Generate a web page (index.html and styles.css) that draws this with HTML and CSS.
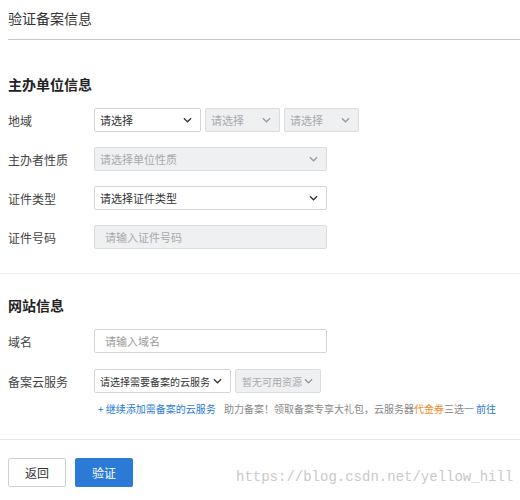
FILE: index.html
```html
<!DOCTYPE html>
<html lang="zh">
<head>
<meta charset="utf-8">
<link rel="stylesheet" href="styles.css">
</head>
<body>
<div class="page">
  <div class="header">验证备案信息</div>

  <div class="section">
    <h2 class="sec-title">主办单位信息</h2>
    <div class="row">
      <div class="label">地域</div>
      <div class="ctrls">
        <div class="select w107"><span>请选择</span><svg viewBox="0 0 10 6"><path d="M1 1l4 4 4-4"/></svg></div>
        <div class="select dis w75"><span>请选择</span><svg viewBox="0 0 10 6"><path d="M1 1l4 4 4-4"/></svg></div>
        <div class="select dis w75"><span>请选择</span><svg viewBox="0 0 10 6"><path d="M1 1l4 4 4-4"/></svg></div>
      </div>
    </div>
    <div class="row">
      <div class="label">主办者性质</div>
      <div class="select dis w233"><span>请选择单位性质</span><svg viewBox="0 0 10 6"><path d="M1 1l4 4 4-4"/></svg></div>
    </div>
    <div class="row">
      <div class="label">证件类型</div>
      <div class="select w233"><span>请选择证件类型</span><svg viewBox="0 0 10 6"><path d="M1 1l4 4 4-4"/></svg></div>
    </div>
    <div class="row">
      <div class="label">证件号码</div>
      <div class="input dis w233"><span>请输入证件号码</span></div>
    </div>
  </div>

  <div class="section sec2">
    <h2 class="sec-title">网站信息</h2>
    <div class="row">
      <div class="label">域名</div>
      <div class="input w233"><span>请输入域名</span></div>
    </div>
    <div class="row">
      <div class="label">备案云服务</div>
      <div class="ctrls">
        <div class="select w137"><span>请选择需要备案的云服务</span><svg viewBox="0 0 10 6"><path d="M1 1l4 4 4-4"/></svg></div>
        <div class="select dis w86"><span>暂无可用资源</span><svg viewBox="0 0 10 6"><path d="M1 1l4 4 4-4"/></svg></div>
      </div>
    </div>
    <div class="tip">
      <span class="add">+ 继续添加需备案的云服务</span>
      <span class="muted">助力备案！领取备案专享大礼包，云服务器<em class="orange">代金券</em>三选一<a class="go">前往</a></span>
    </div>
  </div>

  <div class="footer">
    <button class="btn">返回</button>
    <button class="btn primary">验证</button>
  </div>
  <div class="watermark">https://blog.csdn.net/yellow_hill</div>
</div>
</body>
</html>
```
FILE: styles.css
```css
* { box-sizing: border-box; }
html, body { margin: 0; padding: 0; background: #fff; }
body {
  font-family: "Noto Sans CJK SC", "Noto Sans", sans-serif;
  font-size: 12px;
  color: #333;
  width: 520px;
  height: 500px;
  overflow: hidden;
}
.page { position: relative; padding-left: 8px; height: 500px; }
.header {
  height: 40px;
  line-height: 36px;
  font-size: 14px;
  color: #333;
  border-bottom: 1px solid #c8c8c8;
}
.section { padding-top: 35px; }
.sec-title {
  margin: 0 0 15px 0;
  font-size: 14px;
  font-weight: bold;
  line-height: 18px;
  color: #222;
}
.row {
  display: flex;
  align-items: center;
  height: 24px;
  margin-bottom: 15px;
}
.label { width: 86px; flex: none; color: #444; }
.ctrls { display: flex; gap: 4px; }
.select, .input {
  height: 24px;
  border: 1px solid #d5d5d5;
  border-radius: 2px;
  background: #fff;
  display: flex;
  align-items: center;
  justify-content: space-between;
  padding: 0 8px 0 5px;
  font-size: 11px;
  color: #333;
  white-space: nowrap;
  overflow: hidden;
}
.input { padding-left: 10px; color: #999; }
.select svg { width: 9px; height: 6px; flex: none; fill: none; stroke: #333; stroke-width: 1.4; }
.dis { background: #eef0f2; color: #aaa; border-color: #dadcde; }
.dis svg { stroke: #999; }
.w107 { width: 107px; }
.w75 { width: 75px; }
.w233 { width: 233px; }
.w137 { width: 137px; padding: 0 8px 0 5px; font-size: 10px; }
.w86 { width: 86px; padding: 0 7px 0 6px; font-size: 10px; }
.sec2 {
  margin-top: 24px;
  border-top: 1px solid #eceeef;
  margin-left: -8px;
  padding-left: 8px;
  padding-top: 22px;
}
.sec2 .sec-title { margin-bottom: 15px; }
.sec2 .row { margin-bottom: 16px; }
.sec2 .row + .row { margin-bottom: 5px; }
.tip {
  padding-left: 90px;
  font-size: 10px;
  height: 22px;
  line-height: 22px;
  white-space: nowrap;
}
.add { color: #2a7ad6; margin-right: 6px; }
.muted { color: #888; }
.orange { color: #f08a24; font-style: normal; }
.go { color: #2a7ad6; margin-left: 2px; }
.footer {
  margin-top: 19px;
  margin-left: -8px;
  padding: 18px 0 0 8px;
  border-top: 1px solid #e6e8ea;
  display: flex;
  gap: 9px;
}
.btn {
  width: 58px;
  height: 29px;
  border: 1px solid #d0d0d0;
  border-radius: 2px;
  background: #fff;
  color: #333;
  font-family: inherit;
  font-size: 12px;
  padding: 0;
}
.btn.primary {
  background: #2a7ad6;
  border-color: #2a7ad6;
  color: #fff;
}
.watermark {
  position: absolute;
  left: 236px;
  top: 469px;
  font-family: "Liberation Mono", monospace;
  font-size: 14px;
  color: #c9c9c9;
  letter-spacing: 0;
}
```
